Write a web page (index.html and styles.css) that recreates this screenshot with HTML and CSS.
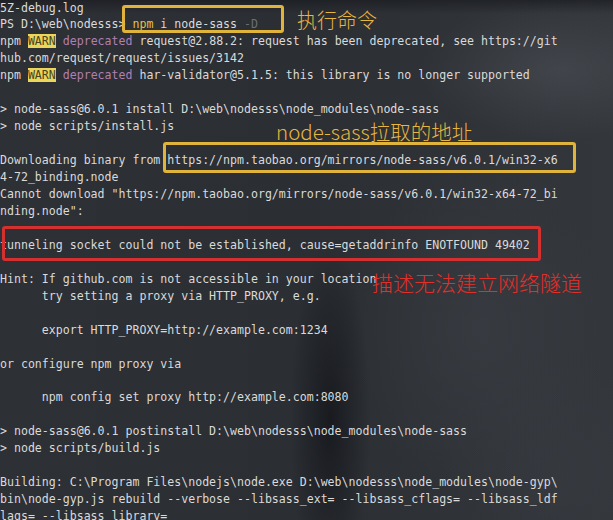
FILE: index.html
```html
<!DOCTYPE html>
<html lang="zh">
<head>
<meta charset="utf-8">
<title>npm i node-sass</title>
<link rel="stylesheet" href="styles.css">
</head>
<body>
<div class="screen">
<pre class="term">5Z-debug.log
PS D:\web\nodesss&gt; <span class="cmd">npm</span> i node-sass <span class="dim">-D</span>
npm <span class="warn">WARN</span> <span class="dep">deprecated</span> request@2.88.2: request has been deprecated, see https://git
hub.com/request/request/issues/3142
npm <span class="warn">WARN</span> <span class="dep">deprecated</span> har-validator@5.1.5: this library is no longer supported

&gt; node-sass@6.0.1 install D:\web\nodesss\node_modules\node-sass
&gt; node scripts/install.js

Downloading binary from https://npm.taobao.org/mirrors/node-sass/v6.0.1/win32-x6
4-72_binding.node
Cannot download "https://npm.taobao.org/mirrors/node-sass/v6.0.1/win32-x64-72_bi
nding.node":

tunneling socket could not be established, cause=getaddrinfo ENOTFOUND 49402

Hint: If github.com is not accessible in your location
      try setting a proxy via HTTP_PROXY, e.g.

      export HTTP_PROXY=http://example.com:1234

or configure npm proxy via

      npm config set proxy http://example.com:8080

&gt; node-sass@6.0.1 postinstall D:\web\nodesss\node_modules\node-sass
&gt; node scripts/build.js

Building: C:\Program Files\nodejs\node.exe D:\web\nodesss\node_modules\node-gyp\
bin\node-gyp.js rebuild --verbose --libsass_ext= --libsass_cflags= --libsass_ldf
lags= --libsass_library=</pre>

<div class="box box-cmd"></div>
<div class="note note-cmd">执行命令</div>

<div class="note note-url">node-sass拉取的地址</div>
<div class="box box-url"></div>

<div class="box box-err"></div>
<div class="note note-err">描述无法建立网络隧道</div>
</div>
</body>
</html>
```

FILE: styles.css
```css
html, body {
  margin: 0;
  padding: 0;
  width: 613px;
  height: 520px;
  overflow: hidden;
  background: #2b2e33;
}

.screen {
  position: relative;
  width: 613px;
  height: 520px;
  overflow: hidden;
  background:
    radial-gradient(ellipse 140px 70px at 560px 70px, rgba(78, 82, 88, 0.55), rgba(78, 82, 88, 0) 100%),
    linear-gradient(to bottom, rgba(20, 22, 26, 0.55) 0px, rgba(20, 22, 26, 0) 14px),
    radial-gradient(ellipse 40px 180px at 330px 420px, rgba(18, 20, 24, 0.75), rgba(18, 20, 24, 0) 100%),
    radial-gradient(ellipse 130px 160px at 480px 330px, rgba(62, 66, 72, 0.5), rgba(62, 66, 72, 0) 100%),
    radial-gradient(ellipse 120px 120px at 560px 470px, rgba(58, 62, 68, 0.45), rgba(58, 62, 68, 0) 100%),
    linear-gradient(to right, #2d3035 0%, #2b2e33 50%, #33363b 100%);
}

.term {
  margin: -0.5px 0 0 0;
  padding: 0;
  font-family: "DejaVu Sans Mono", "Liberation Mono", monospace;
  font-size: 11.58px;
  line-height: 16.95px;
  color: #dadada;
  white-space: pre;
}

.cmd {
  color: #e6c23e;
}

.dim {
  color: #6b6e72;
}

.warn {
  background: #e9d65a;
  color: #4a4320;
}

.dep {
  color: #b27fb2;
}

.box {
  position: absolute;
  box-sizing: border-box;
  border-radius: 3px;
}

.box-cmd {
  left: 122px;
  top: 5px;
  width: 162px;
  height: 28px;
  border: 3px solid #e0b43a;
}

.box-url {
  left: 163px;
  top: 142px;
  width: 413px;
  height: 31px;
  border: 3px solid #e0b43a;
}

.box-err {
  left: 2px;
  top: 226px;
  width: 539px;
  height: 35px;
  border: 3px solid #d3302f;
}

.note {
  position: absolute;
  font-family: "Noto Sans CJK SC", "Noto Sans", sans-serif;
  font-weight: 300;
  white-space: nowrap;
  line-height: 1;
}

.note-cmd {
  left: 297px;
  top: 10px;
  font-size: 20px;
  color: #e8b63e;
}

.note-url {
  left: 276px;
  top: 121px;
  font-size: 20.5px;
  color: #e8b63e;
}

.note-err {
  left: 372px;
  top: 272px;
  font-size: 21px;
  color: #e0302a;
}
```
